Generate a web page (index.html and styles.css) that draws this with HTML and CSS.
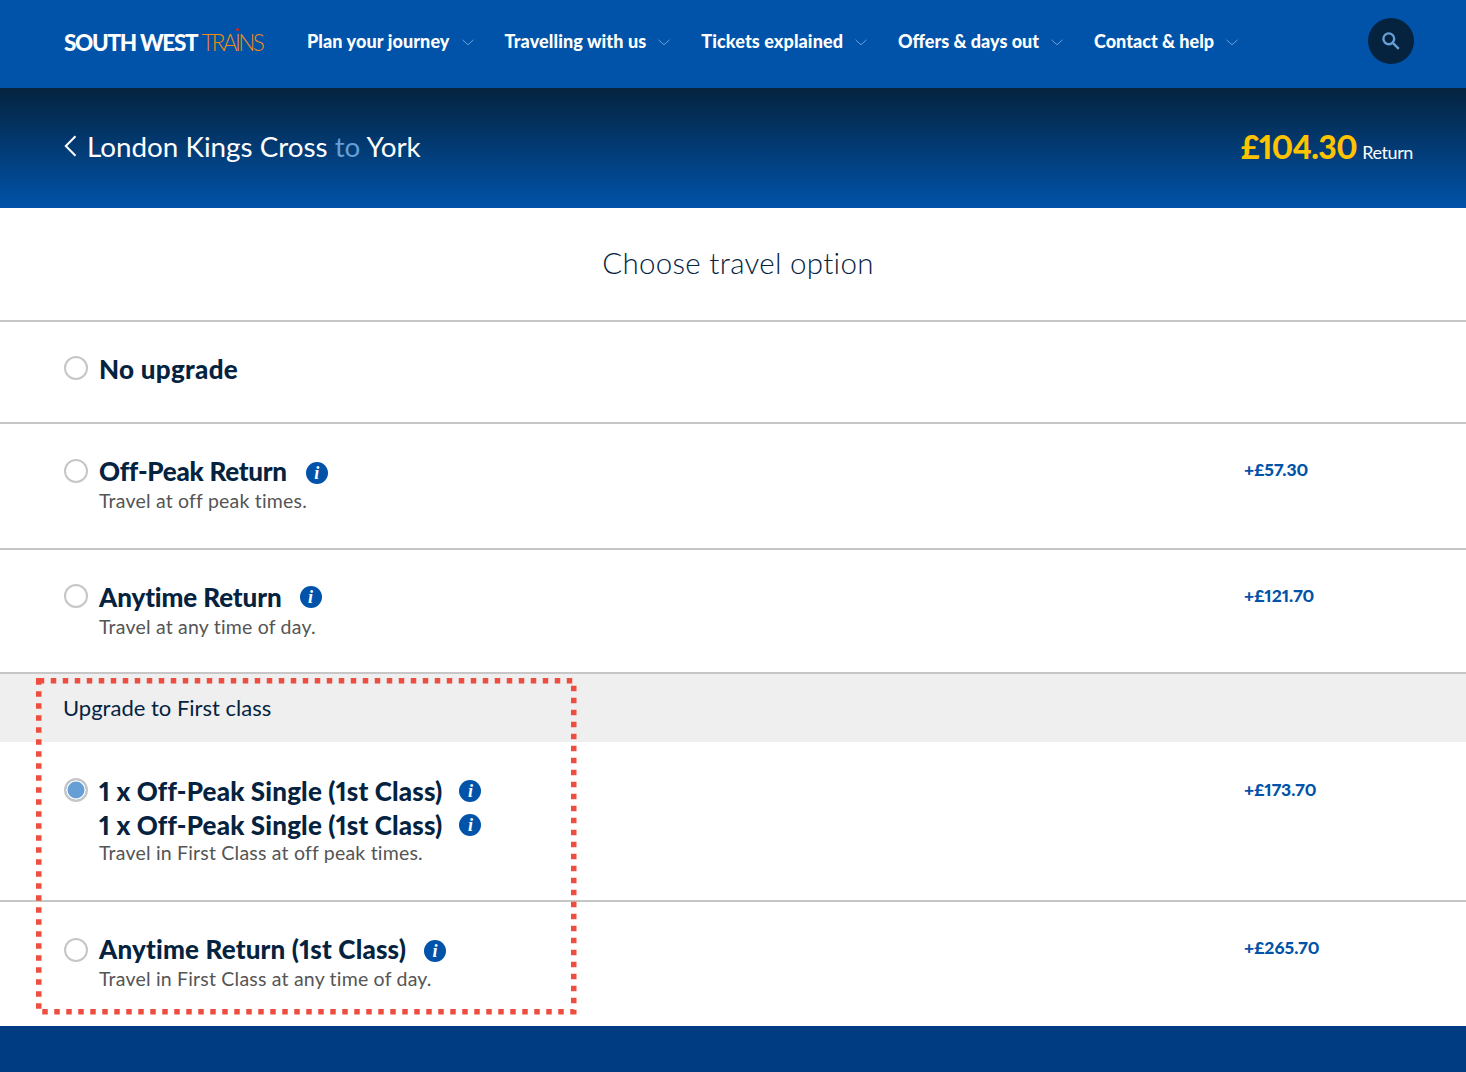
FILE: index.html
```html
<!DOCTYPE html>
<html lang="en">
<head>
<meta charset="utf-8">
<title>Choose travel option</title>
<link rel="stylesheet" href="styles.css">
</head>
<body>
<header class="topbar">
  <a class="logo"><span class="logo-a">SOUTH WEST</span><span class="logo-b">TRA<span class="logo-i">I<i class="logo-dot"></i></span>NS</span></a>
  <nav class="nav">
    <a class="nav-item">Plan your journey<svg class="chev" viewBox="0 0 12 7"><path d="M.5.8 6 5.8 11.500.8"/></svg></a>
    <a class="nav-item">Travelling with us<svg class="chev" viewBox="0 0 12 7"><path d="M.5.8 6 5.8 11.500.8"/></svg></a>
    <a class="nav-item">Tickets explained<svg class="chev" viewBox="0 0 12 7"><path d="M.5.8 6 5.8 11.500.8"/></svg></a>
    <a class="nav-item nav-tight">Offers &amp; days out<svg class="chev" viewBox="0 0 12 7"><path d="M.5.8 6 5.8 11.500.8"/></svg></a>
    <a class="nav-item nav-tight">Contact &amp; help<svg class="chev" viewBox="0 0 12 7"><path d="M.5.8 6 5.8 11.500.8"/></svg></a>
  </nav>
  <button class="search" aria-label="Search"><svg viewBox="0 0 18 18"><circle cx="6.800" cy="6.800" r="5.400"/><path d="M10.800 10.800l6 6"/></svg></button>
</header>

<section class="banner">
  <h1 class="route"><svg class="back" viewBox="0 0 13 22"><path d="M11.500 1.200 1.800 11l9.700 9.800"/></svg>London Kings Cross <span class="to">to</span> York</h1>
  <div class="fare"><strong>£104.30</strong> <span>Return</span></div>
</section>

<main class="options">
  <h2 class="heading">Choose travel option</h2>

  <div class="row row-plain">
    <span class="radio"></span>
    <div class="body"><div class="name">No upgrade</div></div>
  </div>

  <div class="row row-a">
    <span class="radio"></span>
    <div class="body">
      <div class="name">Off-Peak Return<span class="info">i</span></div>
      <p class="desc">Travel at off peak times.</p>
    </div>
    <div class="price">+£57.30</div>
  </div>

  <div class="row row-b">
    <span class="radio"></span>
    <div class="body">
      <div class="name">Anytime Return<span class="info">i</span></div>
      <p class="desc">Travel at any time of day.</p>
    </div>
    <div class="price">+£121.70</div>
  </div>

  <div class="band">Upgrade to First class</div>

  <div class="row row-c">
    <span class="radio radio-on"></span>
    <div class="body">
      <div class="name">1 x Off-Peak Single (1st Class)<span class="info">i</span></div>
      <div class="name name-next">1 x Off-Peak Single (1st Class)<span class="info">i</span></div>
      <p class="desc">Travel in First Class at off peak times.</p>
    </div>
    <div class="price">+£173.70</div>
  </div>

  <div class="row row-d">
    <span class="radio"></span>
    <div class="body">
      <div class="name">Anytime Return (1st Class)<span class="info">i</span></div>
      <p class="desc">Travel in First Class at any time of day.</p>
    </div>
    <div class="price">+£265.70</div>
  </div>
</main>

<footer class="footer"></footer>

<svg class="callout" viewBox="0 0 542 337"><rect x="2.750" y="2.750" width="535" height="331"/></svg>
</body>
</html>
```
FILE: styles.css
```css
* { box-sizing: border-box; }
html, body { margin: 0; padding: 0; }
body {
  position: relative;
  height: 1072px;
  overflow: hidden;
  background: #fff;
  color: #05233f;
  font-family: "Lato", "Liberation Sans", sans-serif;
  font-variant-numeric: proportional-nums;
}

.topbar {
  height: 88px;
  background: #0053a9;
  display: flex;
  align-items: center;
  padding: 0 52px 6px 64px;
}
.logo { display: flex; align-items: baseline; width: 243px; height: 30px; line-height: 30px; margin-top: 4px; }
.logo-a { color: #fff; font-weight: 900; font-size: 22.500px; letter-spacing: -1.300px; margin-right: 4px; white-space: nowrap; }
.logo-b { color: #f08a12; font-weight: 300; font-size: 22.500px; letter-spacing: -2.600px; white-space: nowrap; }
.logo-i { position: relative; }
.logo-dot { position: absolute; left: 1px; top: -1px; width: 3px; height: 3px; border-radius: 50%; background: #e0201c; }

.nav { display: flex; flex: 1; gap: 31px; margin-top: -1px; }
.nav-item { color: #fff; font-weight: 900; font-size: 18px; letter-spacing: .1px; display: flex; align-items: center; white-space: nowrap; }
.nav-tight { letter-spacing: 0; }
.chev { width: 12px; height: 7px; margin-left: 12px; margin-top: 4px; fill: none; stroke: #6a9fd6; stroke-width: 1; }

.search { width: 46px; height: 46px; padding: 0; border: 0; border-radius: 50%; background: #05233f; display: flex; align-items: center; justify-content: center; }
.search svg { width: 18px; height: 18px; fill: none; stroke: #659fd6; stroke-width: 2.400; }

.banner {
  height: 120px;
  background: linear-gradient(#05233f, #0053a9);
  display: flex;
  align-items: center;
  justify-content: space-between;
  padding: 0 53px 4px 64px;
  color: #fff;
}
.route { margin: 0; font-weight: 400; font-size: 27.800px; letter-spacing: 0; display: flex; align-items: center; white-space: pre; }
.back { width: 13px; height: 22px; margin-right: 10px; fill: none; stroke: #fff; stroke-width: 2; }
.to { color: #659fd6; }
.fare { display: flex; align-items: baseline; gap: 5px; white-space: pre; }
.fare strong { color: #fdc300; font-weight: 900; font-size: 32px; letter-spacing: -.55px; }
.fare span { font-size: 18px; letter-spacing: -.4px; }

.heading {
  margin: 0;
  height: 114px;
  padding: 36px 0 0 10px;
  border-bottom: 2px solid #c6c6c6;
  text-align: center;
  font-weight: 300;
  font-size: 29.500px;
  line-height: 38px;
  letter-spacing: .3px;
}

.row {
  display: flex;
  align-items: flex-start;
  padding: 0 64px;
  border-bottom: 2px solid #c6c6c6;
}
.row-plain { height: 102px; padding-top: 33px; }
.row-a { height: 126px; padding-top: 33px; }
.row-b { height: 124px; padding-top: 33px; }
.row-c { height: 160px; padding-top: 35px; }
.row-d { height: 124px; padding-top: 33px; border-bottom: 0; }

.radio { flex: none; width: 24px; height: 24px; margin-right: 11px; border: 2px solid #c6c6c6; border-radius: 50%; background: #fff; }
.row-plain .radio { margin-top: 1px; }
.row-a .radio { margin-top: 2px; }
.row-b .radio { margin-top: 1px; }
.row-c .radio { margin-top: 1px; }
.row-d .radio { margin-top: 3px; }
.radio-on { background: #659fd6; box-shadow: inset 0 0 0 1.500px #fff; }

.body { flex: 1; }
.name { display: flex; align-items: center; height: 28px; font-weight: 900; font-size: 26px; letter-spacing: -.1px; white-space: nowrap; }
.row-plain .name { letter-spacing: .3px; }
.row-a .name { letter-spacing: -.25px; }
.row-c .name { letter-spacing: .16px; }
.row-d .name { letter-spacing: .18px; }
.name-next { margin-top: 6px; }
.info {
  width: 22px; height: 22px; margin-left: 18px; border-radius: 50%;
  background: #0053a9; color: #fff;
  font-family: "Liberation Serif", serif; font-style: italic; font-weight: 700; font-size: 18px; line-height: 22px; text-align: center;
  letter-spacing: 0;
}
.row-a .info { margin-left: 19px; margin-top: 4px; }
.row-c .info { margin-left: 17px; }
.row-d .info { margin-top: 3px; }
.desc { margin: 3px 0 0; color: #555; font-size: 19.500px; line-height: 26px; letter-spacing: .2px; }
.row-c .desc { margin-top: 1px; }
.price { width: 158px; flex: none; color: #0053a9; font-weight: 900; font-size: 17.500px; line-height: 28px; letter-spacing: 0; margin-top: -1px; }

.band { height: 68px; background: #efefef; padding: 20px 63px 0; font-size: 22px; line-height: 28px; }

.footer { height: 46px; background: #003c82; }

.callout { position: absolute; left: 36px; top: 678px; width: 542px; height: 337px; fill: none; stroke: #ee4d3f; stroke-width: 5.500; stroke-dasharray: 5.500 6.500; pointer-events: none; }
```
